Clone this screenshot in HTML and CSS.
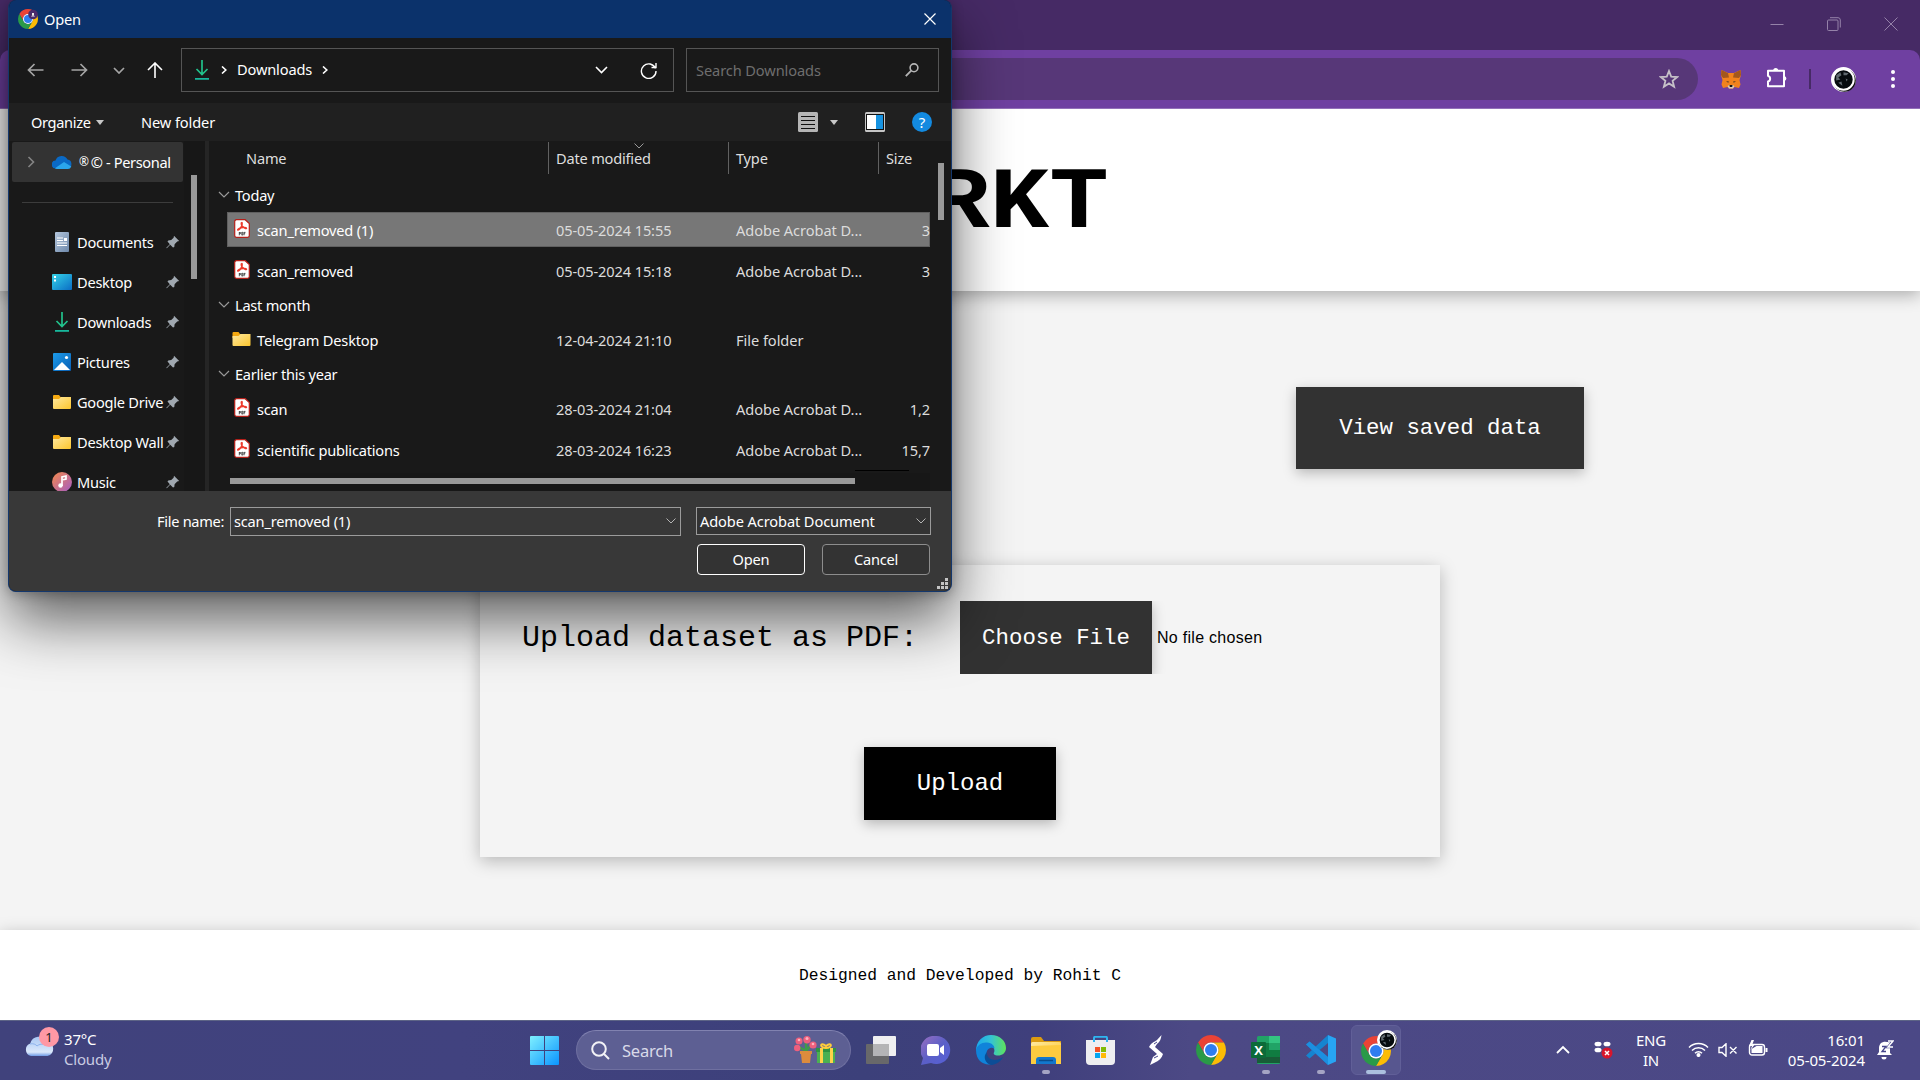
FILE: index.html
```
<!DOCTYPE html>
<html lang="en">
<head>
<meta charset="utf-8">
<title>Upload dataset</title>
<link rel="stylesheet" href="styles.css">
</head>
<body>
<svg class="defs" width="0" height="0">
  <defs>
    <linearGradient id="gFolder" x1="0" y1="0" x2="1" y2="1"><stop offset="0" stop-color="#ffe9a0"/><stop offset="1" stop-color="#fcc62d"/></linearGradient>
    <linearGradient id="gBlue" x1="0" y1="0" x2="1" y2="1"><stop offset="0" stop-color="#35d4e8"/><stop offset="1" stop-color="#0a6cc4"/></linearGradient>
    <linearGradient id="gPic" x1="0" y1="0" x2="1" y2="1"><stop offset="0" stop-color="#1c9bea"/><stop offset="1" stop-color="#0a5fb4"/></linearGradient>
    <linearGradient id="gMusic" x1="0" y1="0" x2="1" y2="1"><stop offset="0" stop-color="#f58a4b"/><stop offset="1" stop-color="#a35bc4"/></linearGradient>
    <linearGradient id="gDoc" x1="0" y1="0" x2="1" y2="1"><stop offset="0" stop-color="#b4c6dc"/><stop offset="1" stop-color="#6d88aa"/></linearGradient>
    <linearGradient id="gWin" x1="0" y1="0" x2="1" y2="1"><stop offset="0" stop-color="#7ff0ff"/><stop offset="1" stop-color="#0a94ff"/></linearGradient>
    <linearGradient id="gCloud" x1="0" y1="0" x2="0" y2="1"><stop offset="0" stop-color="#a9c8f4"/><stop offset=".8" stop-color="#dbe8fb"/><stop offset="1" stop-color="#6f9be6"/></linearGradient>
    <linearGradient id="gEdge" x1="0" y1="0" x2="1" y2="0"><stop offset="0" stop-color="#1aa7ee"/><stop offset=".5" stop-color="#35c3d3"/><stop offset="1" stop-color="#5fe35a"/></linearGradient>
    <linearGradient id="gChat" x1="0" y1="0" x2="1" y2="1"><stop offset="0" stop-color="#9a6fc0"/><stop offset=".5" stop-color="#5b5fc7"/><stop offset="1" stop-color="#5560d8"/></linearGradient>
    <symbol id="chrome" viewBox="0 0 48 48">
      <path fill="#ea4335" d="M24 12h20.78A24 24 0 0 0 3.22 12L13.6 30A12 12 0 0 1 24 12z"/>
      <path fill="#fbbc05" d="M34.39 30L24 48A24 24 0 0 0 44.78 12H24A12 12 0 0 1 34.39 30z"/>
      <path fill="#2a9a48" d="M13.6 30L3.22 12A24 24 0 0 0 24 48L34.39 30A12 12 0 0 1 13.6 30z"/>
      <circle cx="24" cy="24" r="12" fill="#fff"/><circle cx="24" cy="24" r="9.6" fill="#2f7df0"/>
    </symbol>
    <symbol id="pdf" viewBox="0 0 16 19">
      <path d="M2.5.7h8.7l4.1 3.8v12a1.8 1.8 0 0 1-1.8 1.8h-11A1.8 1.8 0 0 1 .7 16.500V2.500A1.800 1.800 0 0 1 2.500.7z" fill="#fff" stroke="#b5201a" stroke-width="1.200"/>
      <path d="M7.800 3.500c-.9 0-.6 1.800.1 3.200M7.800 3.500c.9.300.3 2.600-.5 4.200-.9 1.700-2.200 3.600-3.400 3.400-.9-.4.800-1.900 3.400-2.400 2.500-.5 5-.4 5.200.5.100 1.200-3.300-.6-4.600-2.500" fill="none" stroke="#ee3a2c" stroke-width="1.400"/>
      <path d="M5.300 13v3.300M7.800 13v3.300M10 13v3.300M5 13.500h1.500v1.200H5M8 13.300h.8v2.700H8M10 13.400h1.500M10 14.700h1.200" fill="none" stroke="#444" stroke-width=".9"/>
    </symbol>
    <symbol id="folder" viewBox="0 0 18 14">
      <path d="M0 1Q0 0 1 0h5l1.500 2H17v4H0z" fill="#f5a911"/><path d="M0 4h6l2-2h10v11q0 1-1 1H1q-1 0-1-1z" fill="url(#gFolder)"/>
    </symbol>
    <symbol id="download" viewBox="0 0 14 20">
      <path d="M7 0v14M1.500 9L7 14.500 12.500 9" fill="none" stroke="#22c28c" stroke-width="1.700"/><path d="M0 18h14v1.800H0z" fill="#17b79c"/>
    </symbol>
    <symbol id="pin" viewBox="0 0 14 14"><path d="M8 .8L13.200 6l-2 .6-2.600 2.600-.3 2.800-1.300.5-2.800-2.800L.8 13.200l-.5-.5 3.500-3.500L1.500 6.600l.8-1.200 2.900-.3L7.600 2.700z" fill="#a0a8b0"/></symbol>
    <symbol id="down" viewBox="0 0 12 7"><path d="M1 1l5 5 5-5" fill="none" stroke="currentColor" stroke-width="1.200"/></symbol>
    <symbol id="moon" viewBox="0 0 24 24">
      <circle cx="12" cy="12" r="12" fill="#fff"/><circle cx="13" cy="13" r="10.800" fill="#111"/><circle cx="12" cy="12" r="9.800" fill="#060b0e" stroke="#fff" stroke-width="1.900"/>
      <path d="M5 8l4-3 1 3-3 2 2 2-4 1zM12 5l5 1-2 2-3 0zM7 15l3-1 1 4zM14 11l2 1-1 2z" fill="#a9b6bd" opacity=".55"/>
    </symbol>
  </defs>
</svg>

<div class="screen">
  <div class="tabstrip">
    <svg width="14" height="14"><path d="M.5 7.500h13" stroke="#9582a9"/></svg>
    <svg width="14" height="14" fill="none" stroke="#9582a9"><rect x=".5" y="3" width="10.500" height="10.500" rx="1"/><path d="M3 .7h8a2.300 2.300 0 0 1 2.300 2.300v7.500"/></svg>
    <svg width="14" height="14"><path d="M.5.5l13 13M13.500.5l-13 13" stroke="#9582a9"/></svg>
  </div>
  <div class="toolbar">
    <div class="omnibox"><svg width="20" height="20" viewBox="0 0 20 20"><path d="M10 2l2.200 5.600 6 .4-4.600 3.800 1.500 5.900L10 14.400l-5.100 3.300 1.500-5.900L1.800 8l6-.4z" fill="none" stroke="#c6c1c8" stroke-width="1.800"/></svg></div>
    <svg class="fox" width="20" height="19" viewBox="0 0 20 19"><path d="M.5 0L7 3h6l6.500-3 .5 5-1.500 5 1 4.500-1.500 3.500-4.500-1L12 18.500H8L6.500 17 2 18 .5 14.500l1-4.500L0 5z" fill="#f2821d"/><path d="M.5 0L7 3.200 8 7.500 2 8 0 5zM19.500 0L13 3.200 12 7.500l6 .5 2-3z" fill="#a3571d"/><path d="M5 11.200l3 .3-.8 1.300zM15 11.200l-3 .3.8 1.300z" fill="#4a3526"/><path d="M6.500 16l2-1h3l2 1-1.500 2.500H8z" fill="#d9cbbd"/><path d="M8.500 15h3l-.3 2H8.800z" fill="#161616"/></svg>
    <svg class="puzzle" width="22" height="22" viewBox="0 0 22 22"><path d="M2 3.700h16v15.500H2v-4.700a2.900 2.900 0 0 0 0-5.600z" fill="none" stroke="#fff" stroke-width="2" stroke-linejoin="round"/><path d="M7.200 3.500a2.500 2.500 0 0 1 5 0zM18.500 9a2.600 2.600 0 0 1 0 5z" fill="#fff"/></svg>
    <span class="bar-divider"></span>
    <svg class="avatar" width="25" height="25"><use href="#moon"/></svg>
    <svg class="kebab" width="4" height="18" fill="#fff"><circle cx="2" cy="2" r="2"/><circle cx="2" cy="9" r="2"/><circle cx="2" cy="16" r="2"/></svg>
  </div>

  <main class="page">
    <header class="site-header"><h1>RKT</h1></header>
    <section class="content">
      <div class="actions"><button class="btn saved">View saved data</button></div>
      <form class="card">
        <div class="pick"><label>Upload dataset as PDF:</label><div class="file-input"><button type="button" class="btn choose">Choose File</button><span>No file chosen</span></div></div>
        <button type="button" class="btn upload">Upload</button>
      </form>
    </section>
    <footer class="site-footer">Designed and Developed by Rohit C</footer>
  </main>

  <div class="taskbar">
    <div class="weather">
      <div class="cloud"><svg width="30" height="24" viewBox="0 0 30 24"><path d="M7 23a6.500 6.500 0 0 1-.7-12.500A9 9 0 0 1 23 8.500 7.400 7.400 0 0 1 23.500 23z" fill="url(#gCloud)"/><path d="M6 11c3-1 6 .5 7 2 2-2 6-2.500 8-1" fill="none" stroke="#8db3ee"/></svg><span class="badge">1</span></div>
      <div class="two"><span>37°C</span><span class="dim">Cloudy</span></div>
    </div>
    <div class="apps">
      <svg class="start" width="29" height="29" fill="url(#gWin)"><path d="M1 0h13v14H0V1q0-1 1-1zM15 0h13q1 0 1 1v13H15zM0 15h14v14H1q-1 0-1-1zM15 15h14v13q0 1-1 1H15z"/></svg>
      <div class="search"><svg width="19" height="19" viewBox="0 0 19 19" fill="none" stroke="#f2f2f6" stroke-width="2"><circle cx="8" cy="8" r="6.800"/><path d="M13 13l5 5"/></svg><span>Search</span>
        <svg class="gift" width="42" height="28" viewBox="0 0 42 28"><path d="M12 15V6M12 15L5 11M12 15l7-8" stroke="#3f9b49" stroke-width="2.500"/><g fill="#ee5f7d"><circle cx="5" cy="5" r="3.500"/><circle cx="13" cy="3.700" r="3.700"/><circle cx="3.200" cy="12" r="3.200"/><circle cx="19" cy="9" r="3.600"/></g><g fill="#ffb0bd"><circle cx="5" cy="4" r="1.300"/><circle cx="13" cy="2.500" r="1.500"/><circle cx="19" cy="8" r="1.300"/></g><path d="M6 15h12v3h-1l-1 9H8L7 18H6z" fill="#dc8b3d"/><path d="M22 12h20v4h-1v11H23V16h-1z" fill="#4bb052"/><path d="M22 12h20v4H22z" fill="#2f9341"/><path d="M26 12h3v15h-3zM36 12h3v15h-3z" fill="#ffd24a"/><path d="M32 12c-7 0-6-7 0-2 6-5 7 2 0 2z" fill="none" stroke="#ffce3a" stroke-width="2"/></svg>
      </div>
      <div class="app"><svg width="30" height="28"><rect y="8" width="23" height="20" rx="1" fill="#68686a"/><rect x="7" width="23" height="20" rx="1" fill="#efeff1"/><path d="M7 8h16v12H7z" fill="#b4b4b6"/></svg></div>
      <div class="app"><svg width="30" height="29"><path d="M15 0a14 14 0 1 1-5 27L0 29l2-7A14 14 0 0 1 15 0z" fill="url(#gChat)"/><rect x="6" y="8" width="12" height="12" rx="2" fill="#fff"/><path d="M19 12l4-3v10l-4-3z" fill="#fff"/></svg></div>
      <div class="app"><svg width="30" height="30" viewBox="0 0 30 30"><path d="M0 16C0 6 7 0 15 0c9 0 15 6 15 13 0 5-4 7.500-8 7.500-3.500 0-5-1.500-4-3 1-2 .5-6-4-6C7 11 1 14 0 16z" fill="url(#gEdge)"/><path d="M0 15c1-5 6-8 11-7.500 5 .3 7.500 3.500 7.500 6-3-2-8 0-8 5 0 6 6 9 11 8-7 5.500-21.500 4-21.500-11.500z" fill="#1083da"/><path d="M11 17c-1 7 8 11 16 5-2 4-6 7.500-12 8-5-1-9-8-4-13z" fill="#0c4d96"/></svg></div>
      <div class="app run"><svg width="30" height="27"><path d="M0 2q0-2 2-2h8l3 4h17v6H0z" fill="#dc9b10"/><rect y="5" width="30" height="22" rx="1.500" fill="url(#gFolder)"/><path d="M0 9L30 8v19H0z" fill="#fdcb3f"/><path d="M5 27v-4q0-3 3-3h14q3 0 3 3v4z" fill="#1378cd"/><path d="M8 23.500h14" stroke="#0a4d8c" stroke-width="1.500"/></svg></div>
      <div class="app"><svg width="29" height="29"><path d="M8 6V2q0-1.200 1.200-1.200h10.600Q21 .8 21 2v4" fill="none" stroke="#2fb5f0" stroke-width="2"/><path d="M0 4h29v21q0 4-4 4H4q-4 0-4-4z" fill="#eeeef0"/><path d="M8 4v2M21 4v2" stroke="#2fb5f0" stroke-width="2"/><path fill="#f35325" d="M9 11h5v5H9z"/><path fill="#81bc06" d="M15 11h5v5h-5z"/><path fill="#05a6f0" d="M9 17h5v5H9z"/><path fill="#ffba08" d="M15 17h5v5h-5z"/></svg></div>
      <div class="app"><svg width="14" height="30" viewBox="0 0 14 30"><path d="M12.500 0C12 4 11 7 8 9l-2 3 8 7c-1 4-4 7-9 9l-4 2 3-8 4-3L0 12C2 8 5 7 8 5z" fill="#fff"/><path d="M5 9l3-2M9 21l-4 2" stroke="#45458a"/></svg></div>
      <div class="app"><svg width="30" height="30"><use href="#chrome"/></svg></div>
      <div class="app run"><svg width="29" height="28"><rect x="6" width="23" height="28" rx="1.500" fill="#21a366"/><path d="M6 14h23v13H6z" fill="#185c37"/><path d="M6 7h12v14H6z" fill="#107c41"/><path d="M18 0h11v7H18z" fill="#33c481"/><path d="M18 14h11v7H18z" fill="#107c41"/><rect y="6" width="15" height="16" rx="1" fill="#0c6b39"/><text x="7.500" y="18.500" class="xl">X</text></svg></div>
      <div class="app run"><svg width="30" height="30" viewBox="0 0 30 30"><path d="M22 0l8 3.500v23L22 30z" fill="#27a5f3"/><path d="M22 0v8L3.500 23.500 0 20.500z" fill="#1584d0"/><path d="M22 30v-8L3.500 6.500 0 9.500z" fill="#1a79c4"/><path d="M3.500 6.500L0 9.500 22 30v-8z" fill="#1c8fe0"/></svg></div>
      <div class="app active"><svg width="36" height="36" viewBox="0 0 36 36"><use href="#chrome" x="0" y="6" width="30" height="30"/><use href="#moon" x="16" y="0" width="20" height="20"/></svg></div>
    </div>
    <div class="tray">
      <svg width="14" height="9"><path d="M1 8l6-6 6 6" fill="none" stroke="#fff" stroke-width="1.800"/></svg>
      <svg class="dbx" width="19" height="18"><g fill="#fff"><ellipse cx="4" cy="3" rx="3.500" ry="2.300"/><ellipse cx="13" cy="3" rx="3.500" ry="2.300"/><ellipse cx="4" cy="9" rx="3.500" ry="2.300"/></g><circle cx="13" cy="12" r="5.500" fill="#d8162c"/><path d="M11 10l4 4M15 10l-4 4" stroke="#fff" stroke-width="1.500"/></svg>
      <div class="two lang"><span>ENG</span><span>IN</span></div>
      <svg width="21" height="15" viewBox="0 0 21 15" fill="none" stroke="#fff" stroke-width="1.500"><path d="M1 5.500a13.500 13.500 0 0 1 19 0M4 8.500a9.200 9.200 0 0 1 13 0M7 11.300a5 5 0 0 1 7 0"/><circle cx="10.500" cy="13" r="1.300" fill="#fff"/></svg>
      <svg class="vol" width="20" height="14" viewBox="0 0 20 14" fill="none" stroke="#fff" stroke-width="1.400"><path d="M1 4.500h3L8 .8v12.400L4 9.500H1zM12 4l6.500 6.500M18.500 4L12 10.500"/></svg>
      <svg class="bat" width="20" height="16" viewBox="0 0 20 16"><rect x="1.500" y="4.500" width="15" height="10.500" rx="2.500" fill="none" stroke="#fff" stroke-width="1.400"/><path d="M3.500 13V9l5-3h6v7zM17.500 8h2v4h-2zM3.500 0L1 6h3L2.500 10 7 4H4.500L6 0z" fill="#fff"/></svg>
      <div class="two clock"><span>16:01</span><span>05-05-2024</span></div>
      <svg width="18" height="20" viewBox="0 0 18 20"><path d="M1 15l2-3V8a6 6 0 0 1 8-6h3v11l2 2zM5.500 17h5a2.500 2.500 0 0 1-5 0z" fill="#fff"/><path d="M6 6.500h4l-4 5h4" fill="none" stroke="#45458a" stroke-width="1.300"/><path d="M12 1h5l-5 6h5" fill="none" stroke="#45458a" stroke-width="2.500"/><path d="M12 1h5l-5 6h5" fill="none" stroke="#fff" stroke-width="1.400"/></svg>
    </div>
  </div>

  <div class="dialog">
    <div class="titlebar"><svg width="20" height="20" viewBox="0 0 20 20"><use href="#chrome" width="20" height="20"/><circle cx="15" cy="5.500" r="4.800" fill="#4a2b6b"/><path d="M13 7.500q2-3 4 0zM14 4h2v2h-2z" fill="#eee"/></svg><span>Open</span><svg class="close" width="12" height="12"><path d="M.5.5l11 11M11.500.5l-11 11" stroke="#fff" stroke-width="1.200"/></svg></div>
    <div class="nav">
      <svg class="n1" width="17" height="14" fill="none" stroke="#a5a5a5" stroke-width="1.700"><path d="M16.500 7H1.500M7.500 1l-6 6 6 6"/></svg>
      <svg class="n2" width="17" height="14" fill="none" stroke="#a5a5a5" stroke-width="1.700"><path d="M.5 7h15M9.500 1l6 6-6 6"/></svg>
      <svg class="n3" width="12" height="7"><path d="M1 1l5 5 5-5" fill="none" stroke="#a5a5a5" stroke-width="1.700"/></svg>
      <svg class="n4" width="16" height="16" fill="none" stroke="#fff" stroke-width="1.600"><path d="M8 16V1.500M1 8l7-7 7 7"/></svg>
      <div class="address"><svg width="14" height="20"><use href="#download"/></svg><svg class="c1" width="6" height="8"><path d="M1 .5L4.800 4 1 7.500" fill="none" stroke="#fff" stroke-width="1.600"/></svg><span>Downloads</span><svg class="c2" width="6" height="8"><path d="M1 .5L4.800 4 1 7.500" fill="none" stroke="#fff" stroke-width="1.600"/></svg>
        <svg class="drop" width="13" height="8"><path d="M1 1l5.500 5.500L12 1" fill="none" stroke="#fff" stroke-width="1.600"/></svg><svg class="refresh" width="17" height="17" fill="none" stroke="#fff" stroke-width="1.400"><path d="M15.500 6.500A7.300 7.300 0 1 0 16 9M16 1v4.500h-4.500"/></svg></div>
      <div class="find"><span>Search Downloads</span><svg width="14" height="14" fill="none" stroke="#b4b4b4"><circle cx="9" cy="4.800" r="3.900" stroke-width="1.600"/><path d="M6.200 7.700L.8 13.200" stroke-width="1.900"/></svg></div>
    </div>
    <div class="commands"><span class="org">Organize</span><i class="caret"></i><span class="newf">New folder</span>
      <svg class="view" width="20" height="20"><rect width="20" height="20" rx="1.500" fill="#b5b5b5"/><path d="M3 4.500h14M3 8.500h14M3 12.500h14M3 16.500h14" stroke="#111" stroke-width="1.100"/></svg><i class="caret c"></i>
      <svg class="preview" width="20" height="20"><rect width="20" height="20" rx="1.500" fill="#c5c5c5"/><path d="M1 2h18v16H1z" fill="#111"/><path d="M2 3h9v14H2z" fill="#fff"/><path d="M11 3h7v14h-7z" fill="#1692e0"/></svg>
      <span class="help">?</span></div>
    <div class="browser">
      <nav class="side">
        <div class="personal"><svg width="8" height="12"><path d="M1.500 1l5 5-5 5" fill="none" stroke="#848484" stroke-width="1.600"/></svg><svg class="od" width="20" height="14" viewBox="0 0 20 14"><path d="M4 13.500A4 4 0 0 1 3.500 5.500 6.500 6.500 0 0 1 15.500 4.500 4.600 4.600 0 0 1 16 13.500z" fill="#0a69c4"/><path d="M3 13.300L12 7l7.300 4.500q-1 2.500-3.500 2.500H5q-1.500 0-2-.7z" fill="#2aa6ec"/></svg><span class="reg">®</span><span>© - Personal</span></div>
        <hr>
        <div class="place"><svg width="14" height="20"><rect width="14" height="20" rx="1" fill="url(#gDoc)"/><path d="M2 6h6M2 8.500h6M2 11h10M2 13.500h10" stroke="#fff" stroke-width="1.200"/><path d="M9 6h3v3H9z" fill="#fff"/></svg><span>Documents</span><svg class="pin"><use href="#pin"/></svg></div>
        <div class="place"><svg width="20" height="16"><rect width="20" height="16" rx="1" fill="url(#gBlue)"/><path d="M2 2h2v2H2zM2 5.500h2v2H2z" fill="#fff"/></svg><span>Desktop</span><svg class="pin"><use href="#pin"/></svg></div>
        <div class="place"><svg width="14" height="20"><use href="#download"/></svg><span>Downloads</span><svg class="pin"><use href="#pin"/></svg></div>
        <div class="place"><svg width="18" height="18"><rect width="18" height="18" rx="1" fill="url(#gPic)"/><path d="M1 17l8-8 8 8z" fill="#fff"/><circle cx="13.500" cy="4.500" r="1.600" fill="#fff"/></svg><span>Pictures</span><svg class="pin"><use href="#pin"/></svg></div>
        <div class="place"><svg width="18" height="14"><use href="#folder"/></svg><span>Google Drive</span><svg class="pin"><use href="#pin"/></svg></div>
        <div class="place"><svg width="18" height="14"><use href="#folder"/></svg><span>Desktop Wall</span><svg class="pin"><use href="#pin"/></svg></div>
        <div class="place"><svg width="20" height="20"><circle cx="10" cy="10" r="10" fill="url(#gMusic)"/><path d="M10 14V5l4-1v3l-3 .8" fill="none" stroke="#fff" stroke-width="1.700"/><circle cx="8.500" cy="13.500" r="2.200" fill="#fff"/></svg><span>Music</span><svg class="pin"><use href="#pin"/></svg></div>
      </nav>
      <div class="side-scroll"><i></i></div>
      <div class="list">
        <div class="cols head"><span>Name</span><span>Date modified<svg class="sort" width="10" height="6"><path d="M.5.5L5 5 9.500.5" fill="none" stroke="#999"/></svg></span><span>Type</span><span>Size</span></div>
        <div class="group"><svg width="12" height="7"><use href="#down"/></svg>Today</div>
        <div class="cols row sel"><span><svg width="16" height="19"><use href="#pdf"/></svg>scan_removed (1)</span><span>05-05-2024 15:55</span><span>Adobe Acrobat D...</span><span>3</span></div>
        <div class="cols row"><span><svg width="16" height="19"><use href="#pdf"/></svg>scan_removed</span><span>05-05-2024 15:18</span><span>Adobe Acrobat D...</span><span>3</span></div>
        <div class="group"><svg width="12" height="7"><use href="#down"/></svg>Last month</div>
        <div class="cols row"><span><svg class="fold" width="18" height="14"><use href="#folder"/></svg>Telegram Desktop</span><span>12-04-2024 21:10</span><span>File folder</span><span></span></div>
        <div class="group"><svg width="12" height="7"><use href="#down"/></svg>Earlier this year</div>
        <div class="cols row"><span><svg width="16" height="19"><use href="#pdf"/></svg>scan</span><span>28-03-2024 21:04</span><span>Adobe Acrobat D...</span><span>1,2</span></div>
        <div class="cols row"><span><svg width="16" height="19"><use href="#pdf"/></svg>scientific publications</span><span>28-03-2024 16:23</span><span>Adobe Acrobat D...</span><span>15,7</span></div>
        <div class="hscroll"><i></i><b></b></div>
      </div>
      <div class="list-scroll"><i></i></div>
    </div>
    <div class="bottom">
      <span class="fn">File name:</span>
      <div class="combo name"><span>scan_removed (1)</span><svg width="10" height="6"><path d="M.5.5L5 5 9.500.5" fill="none" stroke="#b5b5b5"/></svg></div>
      <div class="right"><div class="combo type"><span>Adobe Acrobat Document</span><svg width="10" height="6"><path d="M.5.5L5 5 9.500.5" fill="none" stroke="#b5b5b5"/></svg></div>
        <div class="pair"><button class="dbtn primary">Open</button><button class="dbtn">Cancel</button></div></div>
      <svg class="grip" width="11" height="11" fill="#c4c4c4"><path d="M8 0h3v3H8zM4 4h3v3H4zM8 4h3v3H8zM0 8h3v3H0zM4 8h3v3H4zM8 8h3v3H8z"/></svg>
    </div>
  </div>
</div>
</body>
</html>
```
FILE: styles.css
```
* { box-sizing: border-box; }
body { margin: 0; overflow: hidden; font-family: "Noto Sans", sans-serif; }
svg { flex: none; display: block; }
.defs { position: absolute; }
.screen { position: relative; width: 1920px; height: 1080px; display: grid; grid-template-rows: 50px 59px 911px 60px; background: #462a65; overflow: hidden; }

/* browser chrome */
.tabstrip { display: flex; justify-content: flex-end; gap: 43px; padding: 17px 22px 0 0; }
.toolbar { display: flex; align-items: center; background: #6f40a1; border-radius: 10px 10px 0 0; border-bottom: 1px solid #9370b8; }
.omnibox { height: 42px; width: 1598px; margin-left: 100px; border-radius: 21px; background: #573778; display: flex; align-items: center; justify-content: flex-end; padding-right: 19px; }
.fox { margin-left: 23px; }
.puzzle { margin-left: 25px; margin-top: -2px; }
.bar-divider { width: 2px; height: 20px; background: #462a65; margin-left: 21px; }
.avatar { margin-left: 20px; }
.kebab { margin-left: 35px; }

/* site */
.page { display: flex; flex-direction: column; background: #f4f4f4; overflow: hidden; }
.site-header { height: 182px; flex: none; background: #fff; box-shadow: 0 4px 16px rgba(0,0,0,.3); display: flex; align-items: center; justify-content: center; }
h1 { margin: 8px 0 0 0; padding-left: 105.600px; font: bold 88px/1 "Liberation Mono", monospace; transform: scaleX(1.127); color: #000; }
.content { flex: 1; display: flex; flex-direction: column; align-items: center; }
.actions { width: 1248px; height: 274px; display: flex; justify-content: flex-end; padding-top: 96px; }
.btn { border: 0; padding: 0; font-family: "Liberation Mono", monospace; color: #fff; background: #323232; box-shadow: 0 4px 12px rgba(0,0,0,.25); }
.saved { width: 288px; height: 82px; font-size: 22.4px; }
.card { width: 960px; height: 292px; box-shadow: 0 4px 16px rgba(0,0,0,.25); display: flex; flex-direction: column; align-items: center; padding-top: 36px; }
.pick { width: 100%; height: 73px; display: flex; align-items: center; padding-left: 42px; }
.pick label { width: 438px; padding-top: 1px; font: 30px "Liberation Mono", monospace; color: #000; }
.file-input { display: flex; align-items: center; overflow: hidden; height: 73px; font: 16px "Liberation Sans", sans-serif; letter-spacing: .28px; width: 320px; gap: 5px; white-space: nowrap; }
.choose { width: 192px; height: 73px; font-size: 22.4px; letter-spacing: 0; }
.upload { width: 192px; height: 73px; margin-top: 73px; font-size: 24px; background: #000; }
.site-footer { height: 90px; flex: none; background: #fff; box-shadow: 0 4px 16px rgba(0,0,0,.25); display: flex; align-items: center; justify-content: center; padding-top: 1px; font: 16.27px "Liberation Mono", monospace; color: #000; }

/* taskbar */
.taskbar { position: relative; display: flex; background: linear-gradient(90deg, #40427c 0, #41427f 24%, #3c407a 45%, #3f3f7c 54%, #4c4985 62%, #4b4886 100%); border-top: 1px solid #5d6486; color: #fff; font-size: 15px; white-space: nowrap; }
.weather { display: flex; width: 530px; padding: 8px 0 0 25px; gap: 10px; }
.cloud { position: relative; padding-top: 4px; margin-left: -1px; }
.badge { position: absolute; left: 15px; top: -2px; width: 20px; height: 20px; border-radius: 50%; background: #ff98a5; color: #222; font-size: 13px; line-height: 20px; text-align: center; }
.two { display: flex; flex-direction: column; line-height: 20px; letter-spacing: -.2px; }
.dim { color: #c9cbe2; }
.apps { display: flex; align-items: center; height: 58px; }
.start { margin-right: 17px; }
.search { width: 275px; height: 40px; border-radius: 20px; background: #5d5f93; border: 1px solid #6f70a0; border-top-color: #8182b0; display: flex; align-items: center; padding: 0 14px 0 14px; margin-right: 2px; color: #d9dae9; font-size: 16.500px; }
.search span { margin-left: 12px; letter-spacing: -.2px; }
.gift { margin-left: auto; }
.app { position: relative; width: 55px; height: 50px; display: flex; align-items: center; justify-content: center; }
.run::after, .active::after { content: ""; position: absolute; left: 23.500px; bottom: 1px; width: 8px; height: 4px; border-radius: 2px; background: #a5a4c4; }
.active { width: 50px; margin-left: 3px; background: #57568f; border: 1px solid #615f98; border-radius: 6px; padding: 0 0 5px 5px; }
.active::after { left: 14px; bottom: 0; width: 20px; background: #abc0df; }
.xl { font: bold 13px "Open Sans", sans-serif; fill: #fff; text-anchor: middle; }
.tray { position: absolute; right: 26px; top: 0; height: 57px; display: flex; align-items: center; }
.dbx { margin-left: 24px; }
.lang { width: 30px; text-align: center; align-items: center; margin: 0 22px 0 23px; }
.vol { margin-left: 9px; }
.bat { margin: -4px 0 0 10px; }
.clock { width: 78px; align-items: flex-end; margin: 0 11px 0 19px; letter-spacing: -.1px; }

/* file dialog */
.dialog { position: absolute; left: 8px; top: 0; width: 944px; height: 592px; border: 1px solid #14376c; border-top: 0; border-radius: 8px; overflow: hidden; background: #191919; color: #fff; font-size: 14.600px; letter-spacing: -.2px; line-height: 20px; white-space: nowrap; box-shadow: 0 28px 60px rgba(0,0,0,.62), 0 2px 12px rgba(0,0,0,.25); }
.titlebar { height: 38px; background: #0b326b; display: flex; align-items: center; padding: 0 15px 0 9px; }
.titlebar span { margin: 0 0 0 6px; }
.close { margin-left: auto; }
.nav { height: 65px; display: flex; align-items: center; padding: 0 0 1px 18px; }
.n2 { margin-left: 27px; } .n3 { margin-left: 25px; } .n4 { margin-left: 22px; }
.address { width: 493px; height: 44px; border: 1px solid #555; margin-left: 18px; display: flex; align-items: center; padding-left: 13px; }
.address span { margin-top: -2px; letter-spacing: -.15px; }
.c1 { margin: 0 10px 0 12px; } .c2 { margin-left: 10px; }
.drop { margin-left: auto; } .refresh { margin: 0 16px 0 32px; }
.find { width: 253px; height: 44px; border: 1px solid #555; margin-left: 12px; display: flex; align-items: center; justify-content: space-between; padding: 0 19px 0 9px; color: #6e6e6e; }
.find span { letter-spacing: -.1px; }
.commands { height: 38px; background: #202020; display: flex; align-items: center; padding-left: 22px; }
.org { width: 60px; letter-spacing: -.35px; } .newf { margin-left: 37px; letter-spacing: -.1px; }
.caret { border: 4.500px solid transparent; border-top: 5px solid #c8c8c8; border-bottom: 0; margin-left: 5px; }
.view { margin-left: auto; } .caret.c { margin-left: 12px; } .preview { margin-left: 27px; }
.help { width: 20px; height: 20px; border-radius: 50%; background: #138ae0; margin: 0 19px 0 27px; text-align: center; font-size: 15px; line-height: 20px; }
.browser { height: 350px; display: flex; overflow: hidden; }
.side { width: 175px; padding: 1px 0 0 3px; letter-spacing: -.35px; }
.personal { height: 40px; width: 171px; background: #333; border-radius: 2px; display: flex; align-items: center; padding-left: 15px; }
.od { margin: 0 7px 0 17px; }
.reg { font-size: 12px; margin-right: 2px; }
.side hr { border: 0; height: 1px; background: #3c3c3c; width: 151px; margin: 20px 0 19px 10px; }
.place { height: 40px; width: 171px; display: grid; grid-template-columns: 36px 85px 14px; column-gap: 0; align-items: center; padding-left: 32px; }
.place > svg:first-child { justify-self: center; }
.place span { margin-left: -3px; letter-spacing: -.25px; }
.place .pin { width: 14px; height: 14px; margin-left: 1px; }
.side-scroll { width: 25px; background: #171717; border-right: 4px solid #252525; padding: 34px 0 0 7px; }
.side-scroll i { display: block; width: 6px; height: 104px; background: #999; }
.list { width: 721px; padding-left: 18px; }
.cols { display: grid; grid-template-columns: 322px 180px 150px 51px; }
.head { height: 32px; margin: 1px 0 10px; color: #dedede; }
.head span { position: relative; padding: 6px 0 0 7px; border-right: 1px solid #616161; }
.head span:first-child { padding-left: 19px; }
.head span:last-child { border: 0; }
.sort { position: absolute; left: 85px; top: 1px; }
.group { height: 28px; display: flex; align-items: center; gap: 5px; margin-left: -9px; padding-bottom: 7px; letter-spacing: -.25px; }
.group svg { color: #999; }
.row { height: 35px; margin: 0 0 6px; align-items: center; color: #dcdcdc; }
.row span { padding: 1px 0 0 7px; }
.row span:nth-child(n+2) { letter-spacing: -.12px; }
.row span:nth-child(3) { letter-spacing: -.05px; }
.row span:first-child { display: flex; align-items: center; gap: 7px; padding-left: 7px; color: #fff; }
.row span:first-child svg { margin-top: -3px; }
.row span:first-child .fold { margin: -3px -1px 0 -2px; width: 19px; }
.row span:last-child { text-align: right; padding-left: 0; }
.sel { background: #777; box-shadow: inset 0 0 0 1px #606060; }
.hscroll { position: relative; height: 18px; margin-left: 3px; padding-top: 5px; background: #171717; }
.hscroll i { display: block; width: 625px; height: 6px; background: #999; }
.hscroll b { position: absolute; left: 625px; top: -3px; width: 54px; height: 1px; background: #000; }
.list-scroll { padding: 22px 0 0 8px; }
.list-scroll i { display: block; width: 6px; height: 57px; background: #999; }
.bottom { position: relative; height: 100px; background: #383838; display: flex; padding: 16px 0 0 148px; }
.fn { width: 73px; padding-top: 4px; letter-spacing: -.3px; }
.combo { border: 1px solid #9b9b9b; display: flex; align-items: center; justify-content: space-between; padding: 0 4px 0 3px; }
.name { width: 451px; height: 29px; padding-bottom: 1px; }
.right { margin-left: 15px; }
.type { width: 235px; height: 28px; background: #333; letter-spacing: -.1px; }
.pair { display: flex; gap: 17px; padding: 9px 0 0 1px; }
.dbtn { width: 108px; height: 31px; padding: 0 0 2px; border: 1px solid #8d8d8d; border-radius: 4px; background: #333; color: #fff; font: inherit; letter-spacing: inherit; }
.primary { border-color: #fff; }
.grip { position: absolute; right: 3px; bottom: 2px; }
```
